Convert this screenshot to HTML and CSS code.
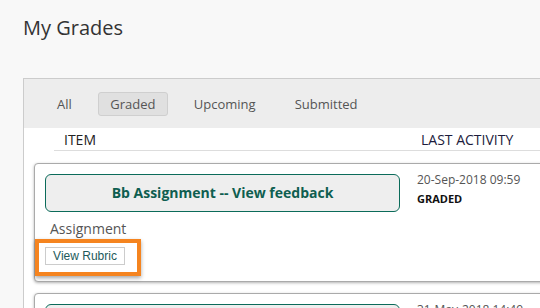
FILE: index.html
```html
<!DOCTYPE html>
<html lang="en">
  <head>
    <meta charset="UTF-8" />
    <meta name="viewport" content="width=device-width, initial-scale=1.0" />
    <title>My Grades</title>
    <link rel="stylesheet" href="styles.css">
  </head>
  <body>
    <h1 class="title">My Grades</h1>

    <div class="panel">
      <div class="tabs">
        <a href="javascript:;" class="tab">All</a>
        <a href="javascript:;" class="tab chosen">Graded</a>
        <a href="javascript:;" class="tab">Upcoming</a>
        <a href="javascript:;" class="tab">Submitted</a>
      </div>

      <div class="list">
        <div class="head">
          <span class="col-item">ITEM</span>
          <span class="col-activity">LAST ACTIVITY</span>
        </div>

        <div class="card">
          <div class="item">
            <a href="javascript:;" class="item-btn">Bb Assignment -- View feedback</a>
            <div class="item-type">Assignment</div>
            <div class="mark">
              <a href="javascript:;" class="rubric">View Rubric</a>
            </div>
          </div>
          <div class="activity">
            <div class="date">20-Sep-2018 09:59</div>
            <div class="status">GRADED</div>
          </div>
        </div>

        <div class="card">
          <div class="item">
            <a href="javascript:;" class="item-btn">Bb Assignment</a>
            <div class="item-type">Assignment</div>
          </div>
          <div class="activity">
            <div class="date">31-May-2018 14:49</div>
            <div class="status">GRADED</div>
          </div>
        </div>
      </div>
    </div>
  </body>
</html>
```

FILE: styles.css
```css
* {
  margin: 0;
  padding: 0;
  box-sizing: border-box;
}
body {
  background-color: #f8f8f8;
  font-family: "Open Sans", "Liberation Sans", sans-serif;
  color: #333;
  padding: 14px 0 0 23px;
  overflow: hidden;
}
a {
  text-decoration: none;
}
.title {
  font-size: 20px;
  font-weight: normal;
  line-height: 27px;
  color: #333;
  margin-bottom: 37px;
}
.panel {
  width: 560px;
  border: 1px solid #ccc;
  background: #fff;
}
.tabs {
  display: flex;
  align-items: center;
  gap: 13px;
  background: #ededed;
  padding: 13px 0 12px 20px;
}
.tab {
  display: block;
  height: 24px;
  line-height: 22px;
  padding: 0 12px;
  font-size: 13px;
  color: #555;
  border: 1px solid transparent;
  border-radius: 3px;
}
.tab.chosen {
  width: 70px;
  text-align: center;
  padding: 0;
  background: #e0e0e0;
  border-color: #cfcfcf;
}
.list {
  padding: 0 0 0 10px;
}
.head {
  display: flex;
  margin-left: 20px;
  height: 23px;
  align-items: center;
  border-bottom: 1px solid #ddd;
  font-size: 14px;
  color: #222;
  padding-top: 1px;
}
.col-item {
  padding-left: 10px;
  width: 367px;
}
.col-activity {
  color: #1c1c3c;
}
.card {
  display: flex;
  margin-top: 12px;
  padding: 10px 10px 5px;
  border: 1px solid #aaa;
  border-radius: 4px;
  background: #fff;
  box-shadow: 0 1px 3px rgba(0, 0, 0, 0.3);
}
.card + .card {
  margin-top: 11px;
}
.item {
  width: 355px;
}
.item-btn {
  display: block;
  height: 38px;
  line-height: 36px;
  text-align: center;
  font-size: 14px;
  font-weight: bold;
  color: #0e5e50;
  background: #eee;
  border: 1px solid #0b6b5a;
  border-radius: 6px;
}
.item-type {
  margin-top: 6px;
  padding-left: 5px;
  font-size: 14px;
  line-height: 21px;
  color: #555;
}
.mark {
  display: inline-block;
  margin-left: -10px;
  padding: 4px 12px 7px 6px;
  border: 4px solid #f5841f;
  box-shadow: 0 2px 4px rgba(0, 0, 0, 0.35);
}
.rubric {
  display: block;
  width: 80px;
  height: 18px;
  line-height: 16px;
  text-align: center;
  font-family: "Liberation Sans", Arial, sans-serif;
  font-size: 12px;
  color: #1d5a5a;
  background: #fff;
  border: 1px solid #ccc;
}
.activity {
  padding-left: 17px;
  margin-top: -2px;
}
.date {
  font-size: 12px;
  line-height: 16px;
  color: #555;
}
.status {
  margin-top: 3px;
  font-size: 11px;
  font-weight: bold;
  line-height: 16px;
  color: #111;
}
```
